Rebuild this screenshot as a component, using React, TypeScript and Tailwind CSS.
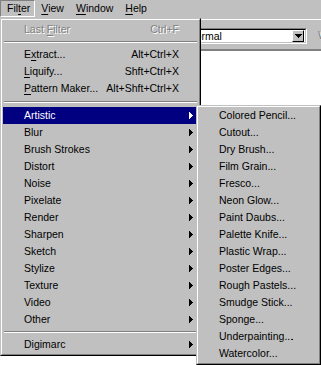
import React from "react";

const font = "font-['Liberation_Sans',Arial,sans-serif] text-[10.5px] leading-[17px]";

function Arrow({ white }: { white?: boolean }) {
  return (
    <svg width="4" height="7" viewBox="0 0 4 7" shapeRendering="crispEdges" className="shrink-0">
      <polygon points="0,0 4,3.5 0,7" fill={white ? "#ffffff" : "#000000"} />
    </svg>
  );
}

function U({ children }: { children: React.ReactNode }) {
  return <span className="underline decoration-1 underline-offset-[2px]">{children}</span>;
}

function Sep({ mt, h }: { mt: number; h: number }) {
  return (
    <div style={{ height: h, paddingTop: mt }} className="mx-[1px]">
      <div className="border-t border-b border-t-[#808080] border-b-white" />
    </div>
  );
}

function SubRow({ label, active }: { label: string; active?: boolean }) {
  return (
    <div
      className={`flex h-[17px] items-center pl-[21px] pr-[5px] ${
        active ? "bg-[#000080] text-white" : "text-black"
      }`}
    >
      <span className="flex-1 whitespace-nowrap">{label}</span>
      <Arrow white={active} />
    </div>
  );
}

function ShortRow({ label, shortcut }: { label: React.ReactNode; shortcut: string }) {
  return (
    <div className="flex h-[17px] items-center pl-[21px] pr-[19px] text-black">
      <span className="flex-1 whitespace-nowrap">{label}</span>
      <span className="whitespace-nowrap">{shortcut}</span>
    </div>
  );
}

const groups = [
  "Artistic",
  "Blur",
  "Brush Strokes",
  "Distort",
  "Noise",
  "Pixelate",
  "Render",
  "Sharpen",
  "Sketch",
  "Stylize",
  "Texture",
  "Video",
  "Other",
];

const artistic = [
  "Colored Pencil...",
  "Cutout...",
  "Dry Brush...",
  "Film Grain...",
  "Fresco...",
  "Neon Glow...",
  "Paint Daubs...",
  "Palette Knife...",
  "Plastic Wrap...",
  "Poster Edges...",
  "Rough Pastels...",
  "Smudge Stick...",
  "Sponge...",
  "Underpainting...",
  "Watercolor...",
];

const raised = "border border-t-[#c0c0c0] border-l-[#c0c0c0] border-r-black border-b-black";
const raisedInner = "border border-t-white border-l-white border-r-[#808080] border-b-[#808080]";

export default function App() {
  return (
    <div className={`relative h-[365px] w-[321px] overflow-hidden bg-white ${font}`}>
      {/* menu bar */}
      <div className="flex h-[19px] items-start bg-[#c0c0c0] text-black">
        <div className="h-[17px] border border-t-[#808080] border-l-[#808080] border-r-white border-b-white pl-[6px] pr-[4px] leading-[15px]">
          Fil<U>t</U>er
        </div>
        <div className="h-[17px] px-[6px]">
          <U>V</U>iew
        </div>
        <div className="h-[17px] px-[6px]">
          <U>W</U>indow
        </div>
        <div className="h-[17px] px-[6px]">
          <U>H</U>elp
        </div>
      </div>

      {/* options bar */}
      <div className="flex h-[32px] items-start border-t border-t-white border-b-2 border-b-[#808080] bg-[#c0c0c0]">
        <div className="ml-[184px] mt-[8px] flex h-[16px] w-[123px] shrink-0 border border-t-[#808080] border-l-[#808080] border-r-white border-b-white">
          <div className="flex flex-1 items-center border border-t-black border-l-black border-r-[#c0c0c0] border-b-[#c0c0c0] bg-white pr-[1px]">
            <span className="flex-1 pl-[2px] leading-[12px] text-black">Normal</span>
            <div className="flex h-[12px] w-[12px] items-center justify-center border border-t-white border-l-white border-r-black border-b-black bg-[#c0c0c0]">
              <svg width="7" height="4" viewBox="0 0 7 4" shapeRendering="crispEdges">
                <polygon points="0,0 7,0 3.5,4" fill="#000" />
              </svg>
            </div>
          </div>
        </div>
        <div className="ml-[11px] mt-[8px] shrink-0 whitespace-nowrap leading-[15px] text-[#808080] [text-shadow:1px_1px_0_#ffffff]">
          Wet Edges
        </div>
      </div>

      {/* main Filter menu */}
      <div className={`absolute left-0 top-[18px] w-[201px] bg-[#c0c0c0] ${raised}`}>
        <div className={`p-[1px] ${raisedInner}`}>
          <div className="flex h-[17px] items-center pl-[21px] pr-[19px] text-[#808080] [text-shadow:1px_1px_0_#ffffff]">
            <span className="flex-1 whitespace-nowrap">
              Last <U>F</U>ilter
            </span>
            <span>Ctrl+F</span>
          </div>
          <Sep mt={3} h={8} />
          <ShortRow label={<>E<U>x</U>tract...</>} shortcut="Alt+Ctrl+X" />
          <ShortRow label={<><U>L</U>iquify...</>} shortcut="Shft+Ctrl+X" />
          <ShortRow label={<><U>P</U>attern Maker...</>} shortcut="Alt+Shft+Ctrl+X" />
          <Sep mt={4} h={10} />
          {groups.map((g, i) => (
            <SubRow key={g} label={g} active={i === 0} />
          ))}
          <Sep mt={3} h={8} />
          <SubRow label="Digimarc" />
        </div>
      </div>

      {/* Artistic submenu */}
      <div className={`absolute left-[196px] top-[105px] w-[125px] bg-[#c0c0c0] ${raised}`}>
        <div className={`pb-[1px] ${raisedInner}`}>
          {artistic.map((a) => (
            <div key={a} className="flex h-[17px] items-center pl-[21px] text-black">
              <span className="whitespace-nowrap">{a}</span>
            </div>
          ))}
        </div>
      </div>

      <div className="absolute left-[292px] top-[339px] h-[1px] w-[1px] bg-black" />
    </div>
  );
}
